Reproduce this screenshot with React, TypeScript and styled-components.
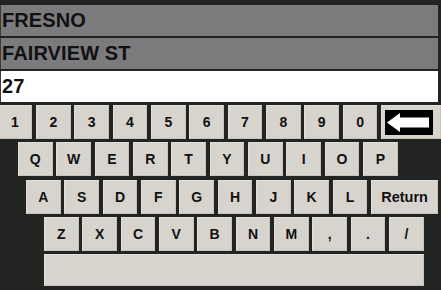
import React from "react";
import styled, { createGlobalStyle } from "styled-components";

const Global = createGlobalStyle`
  html, body { margin: 0; padding: 0; background: #222421; }
  #root { width: 441px; height: 290px; }
`;

const Screen = styled.div`
  width: 441px;
  height: 290px;
  overflow: hidden;
  background: #222421;
  display: flex;
  flex-direction: column;
  padding-top: 5px;
  box-sizing: border-box;
  font-family: "Liberation Sans", Arial, sans-serif;
`;

const Fields = styled.div`
  display: flex;
  flex-direction: column;
  gap: 2px;
  width: 438px;
`;

const Field = styled.div<{ $light?: boolean }>`
  height: 31px;
  background: ${(p) => (p.$light ? "#ffffff" : "#7b7a7d")};
  border-left: 1px solid #3a3a3a;
  display: flex;
  align-items: center;
  padding-left: 1px;
  font-size: 20px;
  font-weight: 700;
  color: #111111;
  letter-spacing: 0.1px;
`;

const Keyboard = styled.div`
  display: flex;
  flex-direction: column;
  gap: 3.25px;
  margin-top: 3px;
`;

const Row = styled.div<{ $indent: number }>`
  display: flex;
  gap: 3.85px;
  height: 34px;
  margin-left: ${(p) => p.$indent}px;
`;

const Key = styled.div<{ $w?: number }>`
  flex: none;
  width: ${(p) => p.$w ?? 34.5}px;
  height: 100%;
  background: #d7d4ce;
  box-shadow: inset 1px 1px 0 #e2e0db, inset -1px -1px 0 #c6c3bd;
  display: flex;
  align-items: center;
  justify-content: center;
  font-size: 14px;
  font-weight: 700;
  color: #111111;
  box-sizing: border-box;
`;

const SpaceRow = styled.div`
  display: flex;
  margin-left: 44px;
  height: 32px;
`;

const SpaceKey = styled(Key)`
  width: 379.5px;
`;

const BackKey = styled(Key)`
  justify-content: flex-start;
  align-items: flex-start;
  padding: 5px 0 0 4px;
`;

const Arrow = () => (
  <svg width="48" height="25" viewBox="0 0 48 25">
    <rect x="0" y="0" width="48" height="25" fill="#000" />
    <polygon
      points="2,12.5 15,3 15,7.5 44,7.5 44,17.5 15,17.5 15,22"
      fill="#fff"
    />
  </svg>
);

const row1 = ["1", "2", "3", "4", "5", "6", "7", "8", "9", "0"];
const row2 = ["Q", "W", "E", "R", "T", "Y", "U", "I", "O", "P"];
const row3 = ["A", "S", "D", "F", "G", "H", "J", "K", "L"];
const row4 = ["Z", "X", "C", "V", "B", "N", "M", ",", ".", "/"];

export default function App() {
  return (
    <>
      <Global />
      <Screen>
        <Fields>
          <Field>FRESNO</Field>
          <Field>FAIRVIEW ST</Field>
          <Field $light>27</Field>
        </Fields>
        <Keyboard>
          <Row $indent={-2.3}>
            {row1.map((k) => (
              <Key key={k}>{k}</Key>
            ))}
            <BackKey $w={60}>
              <Arrow />
            </BackKey>
          </Row>
          <Row $indent={18}>
            {row2.map((k) => (
              <Key key={k}>{k}</Key>
            ))}
          </Row>
          <Row $indent={26}>
            {row3.map((k) => (
              <Key key={k}>{k}</Key>
            ))}
            <Key $w={67}>
              <span style={{ fontSize: "14.5px" }}>Return</span>
            </Key>
          </Row>
          <Row $indent={44}>
            {row4.map((k) => (
              <Key key={k}>{k}</Key>
            ))}
          </Row>
          <SpaceRow>
            <SpaceKey />
          </SpaceRow>
        </Keyboard>
      </Screen>
    </>
  );
}
